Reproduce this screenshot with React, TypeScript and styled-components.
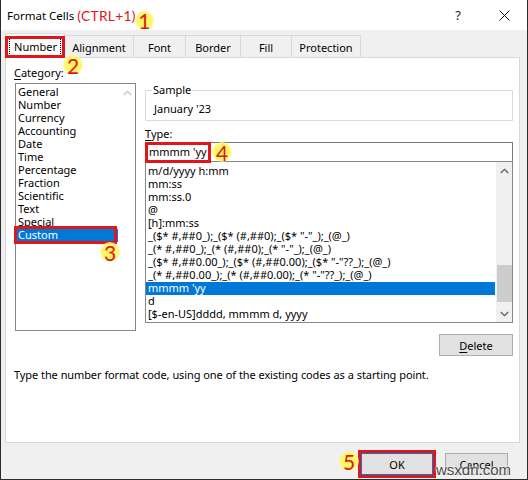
import styled, { createGlobalStyle } from "styled-components";

const GlobalStyle = createGlobalStyle`
  body {
    margin: 0;
    background: #f0f0f0;
  }
`;

const UI_FONT = `"Noto Sans", "Liberation Sans", sans-serif`;
const MARK_FONT = `Lato, "Liberation Sans", sans-serif`;

const categories = [
  "General",
  "Number",
  "Currency",
  "Accounting",
  "Date",
  "Time",
  "Percentage",
  "Fraction",
  "Scientific",
  "Text",
  "Special",
  "Custom",
];

const formats = [
  "m/d/yyyy h:mm",
  "mm:ss",
  "mm:ss.0",
  "@",
  "[h]:mm:ss",
  '_($* #,##0_);_($* (#,##0);_($* "-"_);_(@_)',
  '_(* #,##0_);_(* (#,##0);_(* "-"_);_(@_)',
  '_($* #,##0.00_);_($* (#,##0.00);_($* "-"??_);_(@_)',
  '_(* #,##0.00_);_(* (#,##0.00);_(* "-"??_);_(@_)',
  "mmmm 'yy",
  "d",
  "[$-en-US]dddd, mmmm d, yyyy",
];

const tabs = [
  { label: "Number", w: 60 },
  { label: "Alignment", w: 70 },
  { label: "Font", w: 53 },
  { label: "Border", w: 56 },
  { label: "Fill", w: 52 },
  { label: "Protection", w: 70 },
];

const Window = styled.div`
  position: relative;
  width: 528px;
  height: 480px;
  box-sizing: border-box;
  border: 1px solid #2b2b2b;
  border-top: none;
  background: #f0f0f0;
  display: flex;
  flex-direction: column;
  font-family: ${UI_FONT};
  font-size: 11px;
  color: #000;
  overflow: hidden;
`;

const TitleBar = styled.div`
  height: 30px;
  flex: none;
  background: #fff;
  display: flex;
  align-items: center;
  padding-left: 6px;
`;

const Title = styled.span`
  font-size: 11.5px;
  white-space: nowrap;
`;

const Shortcut = styled.span`
  margin-left: 3px;
  font-family: ${MARK_FONT};
  font-size: 13.8px;
  color: #e0161b;
  letter-spacing: 0.3px;
`;

const TitleButtons = styled.div`
  margin-left: auto;
  display: flex;
  align-items: center;
  height: 100%;
`;

const HelpGlyph = styled.span`
  width: 46px;
  text-align: center;
  font-size: 13px;
  color: #222;
`;

const CloseBtn = styled.div`
  width: 46px;
  height: 100%;
  display: flex;
  align-items: center;
  justify-content: center;
`;

// numbered yellow step marker
const Badge = styled.span<{ $size?: number }>`
  display: inline-flex;
  align-items: center;
  justify-content: center;
  width: ${(p) => p.$size ?? 20}px;
  height: ${(p) => p.$size ?? 20}px;
  border-radius: 50%;
  background: radial-gradient(circle, #fff45c 0%, #fff66e 55%, rgba(255, 250, 160, 0.6) 75%, rgba(255, 255, 255, 0) 100%);
  font-family: ${MARK_FONT};
  font-size: 21px;
  line-height: 1;
  color: #e0161b;
  pointer-events: none;
`;

const FloatBadge = styled(Badge)<{ $top: number; $left: number }>`
  position: absolute;
  top: ${(p) => p.$top}px;
  left: ${(p) => p.$left}px;
  z-index: 5;
`;

const TitleBadge = styled(Badge)`
  margin: 11px 0 0 -1px;
`;

const RedFrame = styled.div<{ $top: number; $left: number; $w: number; $h: number }>`
  position: absolute;
  top: ${(p) => p.$top}px;
  left: ${(p) => p.$left}px;
  width: ${(p) => p.$w}px;
  height: ${(p) => p.$h}px;
  box-sizing: border-box;
  border: 3px solid #e0161b;
  z-index: 4;
  pointer-events: none;
`;

const Body = styled.div`
  flex: 1;
  display: flex;
  flex-direction: column;
  padding-left: 4px;
`;

const TabStrip = styled.div`
  display: flex;
  align-items: flex-end;
  height: 24px;
  margin-top: 3px;
`;

const Tab = styled.div<{ $w: number; $active?: boolean }>`
  position: relative;
  width: ${(p) => p.$w}px;
  height: ${(p) => (p.$active ? 25 : 22)}px;
  margin-bottom: ${(p) => (p.$active ? -1 : 0)}px;
  margin-left: -1px;
  box-sizing: border-box;
  border: 1px solid #d9d9d9;
  border-bottom: none;
  background: ${(p) => (p.$active ? "#fff" : "#f0f0f0")};
  display: flex;
  align-items: center;
  justify-content: center;
  padding-top: 1px;
  z-index: ${(p) => (p.$active ? 2 : 1)};
  &:first-child {
    margin-left: 0;
  }
`;

const FocusText = styled.span`
  outline: 1px dotted #000;
  outline-offset: 0;
  padding: 1px 3px 1px 4px;
  margin-top: 1px;
  line-height: 14px;
`;

const Panel = styled.div`
  position: relative;
  width: 515px;
  height: 386px;
  box-sizing: border-box;
  background: #fff;
  border: 1px solid #d9d9d9;
  display: grid;
  grid-template-columns: 121px 368px;
  grid-template-rows: auto 1fr;
  column-gap: 9px;
  padding: 7px 0 0 9px;
`;

const Column = styled.div`
  position: relative;
  display: flex;
  flex-direction: column;
`;

const Label = styled.div`
  line-height: 16px;
  margin-left: -1px;
  u {
    text-decoration: underline;
    text-underline-offset: 2px;
  }
`;

const ListBox = styled.div<{ $h: number }>`
  position: relative;
  height: ${(p) => p.$h}px;
  box-sizing: border-box;
  border: 1px solid #828790;
  display: flex;
  background: #fff;
`;

const Rows = styled.div<{ $pt: number }>`
  flex: 1;
  min-width: 0;
  padding-top: ${(p) => p.$pt}px;
`;

const Row = styled.div<{ $selected?: boolean }>`
  height: 13px;
  line-height: 12px;
  padding-left: 2px;
  margin-right: 1px;
  white-space: nowrap;
  background: ${(p) => (p.$selected ? "#0078d7" : "transparent")};
  color: ${(p) => (p.$selected ? "#fff" : "#000")};
`;

const ScrollTrack = styled.div<{ $bg: string }>`
  width: 16px;
  flex: none;
  background: ${(p) => p.$bg};
  display: flex;
  flex-direction: column;
  align-items: center;
`;

const ArrowSlot = styled.div`
  height: 17px;
  flex: none;
  display: flex;
  align-items: center;
  justify-content: center;
`;

const Thumb = styled.div<{ $top: number; $h: number }>`
  width: 15px;
  margin-top: ${(p) => p.$top}px;
  height: ${(p) => p.$h}px;
  background: #cdcdcd;
`;

const Spacer = styled.div`
  flex: 1;
`;

const SampleBox = styled.fieldset`
  margin: 18px 0 0 0;
  padding: 0 6px 3px 6px;
  border: 1px solid #dcdcdc;
  min-width: 0;
  legend {
    padding: 0 1px;
    line-height: 14px;
  }
`;

const SampleValue = styled.div`
  line-height: 16px;
  margin: 4px 0 0 2px;
`;

const TypeLabel = styled(Label)`
  margin: 5px 0 0 0;
`;

const TypeInput = styled.div`
  position: relative;
  height: 20px;
  box-sizing: border-box;
  border: 1px solid #7a7a7a;
  padding-left: 3px;
  line-height: 18px;
`;

const ButtonRow = styled.div`
  display: flex;
  justify-content: flex-end;
  margin-top: 11px;
`;

const Button = styled.div<{ $w: number; $default?: boolean }>`
  position: relative;
  width: ${(p) => p.$w}px;
  height: 22px;
  box-sizing: border-box;
  border: 1px solid ${(p) => (p.$default ? "#0078d7" : "#adadad")};
  background: #e1e1e1;
  display: flex;
  align-items: center;
  justify-content: center;
  u {
    text-decoration: underline;
    text-underline-offset: 2px;
  }
`;

const Hint = styled.div`
  grid-column: 1 / span 2;
  margin: 11px 0 0 -1px;
  line-height: 16px;
  letter-spacing: -0.12px;
  word-spacing: 0.3px;
`;

const Footer = styled.div`
  position: relative;
  display: flex;
  justify-content: flex-end;
  gap: 12px;
  padding: 10px 19px 0 0;
`;

const Watermark = styled.span`
  position: absolute;
  right: 16px;
  bottom: -3px;
  font-family: "Liberation Sans", sans-serif;
  font-size: 15px;
  color: #4a4a4a;
  text-shadow: 0 0 2px #fff, 0 0 2px #fff;
  z-index: 6;
`;

const Chevron = ({ up, color }: { up?: boolean; color: string }) => (
  <svg width="9" height="6" viewBox="0 0 9 6">
    <polyline
      points={up ? "0.8,5 4.5,1.3 8.2,5" : "0.8,1 4.5,4.7 8.2,1"}
      fill="none"
      stroke={color}
      strokeWidth="1.3"
    />
  </svg>
);

const CloseIcon = () => (
  <svg width="11" height="11" viewBox="0 0 11 11">
    <path d="M0.5 0.5 L10.5 10.5 M10.5 0.5 L0.5 10.5" stroke="#111" strokeWidth="1" />
  </svg>
);

const App = () => {
  return (
    <Window>
      <GlobalStyle />
      <TitleBar>
        <Title>Format Cells</Title>
        <Shortcut>(CTRL+1)</Shortcut>
        <TitleBadge $size={19}>1</TitleBadge>
        <TitleButtons>
          <HelpGlyph>?</HelpGlyph>
          <CloseBtn>
            <CloseIcon />
          </CloseBtn>
        </TitleButtons>
      </TitleBar>

      <Body>
        <TabStrip>
          {tabs.map((t, i) =>
            i === 0 ? (
              <Tab key={t.label} $w={t.w} $active>
                <FocusText>{t.label}</FocusText>
                <RedFrame $top={2} $left={-1} $w={60} $h={22} />
                <FloatBadge $top={21} $left={57}>
                  2
                </FloatBadge>
              </Tab>
            ) : (
              <Tab key={t.label} $w={t.w}>
                {t.label}
              </Tab>
            )
          )}
        </TabStrip>

        <Panel>
          {/* category picker */}
          <Column>
            <Label>
              <u>C</u>ategory:
            </Label>
            <ListBox $h={248} style={{ marginTop: 2 }}>
              <Rows $pt={2}>
                {categories.map((c) => (
                  <Row key={c} $selected={c === "Custom"}>
                    {c}
                  </Row>
                ))}
              </Rows>
              <ScrollTrack $bg="#fff">
                <ArrowSlot>
                  <Chevron up color="#c4c4c4" />
                </ArrowSlot>
              </ScrollTrack>
              <RedFrame $top={142} $left={-2} $w={103} $h={18} />
              <FloatBadge $top={158} $left={84}>
                3
              </FloatBadge>
            </ListBox>
          </Column>

          {/* sample, type and format codes */}
          <Column>
            <SampleBox>
              <legend>Sample</legend>
              <SampleValue>January '23</SampleValue>
            </SampleBox>
            <TypeLabel>
              <u>T</u>ype:
            </TypeLabel>
            <TypeInput>
              mmmm 'yy
              <RedFrame $top={-1} $left={-1} $w={66} $h={21} />
              <FloatBadge $top={-1} $left={66}>
                4
              </FloatBadge>
            </TypeInput>
            <ListBox $h={162} style={{ marginTop: -1 }}>
              <Rows $pt={3}>
                {formats.map((f) => (
                  <Row key={f} $selected={f === "mmmm 'yy"}>
                    {f}
                  </Row>
                ))}
              </Rows>
              <ScrollTrack $bg="#f0f0f0">
                <ArrowSlot>
                  <Chevron up color="#606060" />
                </ArrowSlot>
                <Thumb $top={86} $h={37} />
                <Spacer />
                <ArrowSlot>
                  <Chevron color="#606060" />
                </ArrowSlot>
              </ScrollTrack>
            </ListBox>
            <ButtonRow>
              <Button $w={74}>
                <u>D</u>elete
              </Button>
            </ButtonRow>
          </Column>

          <Hint>
            Type the number format code, using one of the existing codes as a starting point.
          </Hint>
        </Panel>

        <Footer>
          <FloatBadge $top={8} $left={334}>
            5
          </FloatBadge>
          <Button $w={72} $default>
            OK
            <RedFrame $top={-4} $left={-4} $w={78} $h={28} />
          </Button>
          <Button $w={63}>Cancel</Button>
          <Watermark>wsxdn.com</Watermark>
        </Footer>
      </Body>
    </Window>
  );
};

export default App;
